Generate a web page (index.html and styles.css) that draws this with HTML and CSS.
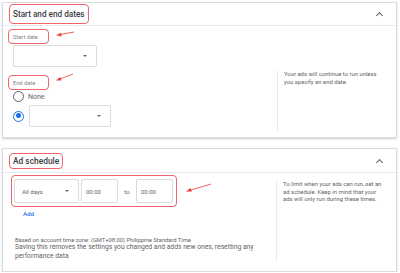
FILE: index.html
```
<!DOCTYPE html>
<html lang="en">
<head>
    <meta charset="UTF-8">
    <meta name="viewport" content="width=device-width, initial-scale=1.0">
    <title>Campaign settings</title>
    <link rel="stylesheet" href="styles.css">
</head>
<body>
    <div class="page">
        <!-- Start and end dates -->
        <div class="card">
            <div class="card-header">
                <span class="mark title-mark">Start and end dates</span>
                <span class="chevron"></span>
            </div>
            <div class="card-body">
                <div class="section">
                    <div class="section-main">
                        <div class="mark field-label">Start date</div>
                        <div class="select select-date"><span class="caret"></span></div>
                    </div>
                </div>
                <div class="section">
                    <div class="section-main">
                        <div class="mark field-label end-label">End date</div>
                        <div class="radio-row">
                            <span class="radio"></span>
                            <span class="radio-text">None</span>
                        </div>
                        <div class="radio-row">
                            <span class="radio checked"></span>
                            <div class="select select-date"><span class="caret"></span></div>
                        </div>
                    </div>
                    <div class="section-aside aside-dates">
                        Your ads will continue to run unless you specify an end date.
                    </div>
                </div>
            </div>
            <svg class="annot" width="396" height="137" viewBox="0 0 396 137">
                <line x1="71" y1="29" x2="57" y2="31.5" stroke="#ef3b3b" stroke-width="0.8"/>
                <polygon points="53,32.2 58,29.8 58.6,33.4" fill="#ef3b3b"/>
                <line x1="70" y1="71" x2="57" y2="76" stroke="#ef3b3b" stroke-width="0.8"/>
                <polygon points="53,77.5 57.2,74 58.4,77.4" fill="#ef3b3b"/>
            </svg>
        </div>

        <!-- Ad schedule -->
        <div class="card">
            <div class="card-header header-small">
                <span class="mark title-mark small">Ad schedule</span>
                <span class="chevron"></span>
            </div>
            <div class="card-body">
                <div class="section">
                    <div class="section-main">
                        <div class="mark schedule">
                            <div class="select select-days">All days<span class="caret"></span></div>
                            <div class="time">00:00</div>
                            <span class="to">to</span>
                            <div class="time">00:00</div>
                        </div>
                        <a class="add">Add</a>
                        <p class="zone">Based on account time zone: (GMT+08:00) Philippine Standard Time</p>
                        <p class="note">Saving this removes the settings you changed and adds new ones, resetting any performance data</p>
                    </div>
                    <div class="section-aside aside-schedule">
                        To limit when your ads can run, set an ad schedule. Keep in mind that your ads will only run during these times.
                    </div>
                </div>
            </div>
            <svg class="annot" width="396" height="121" viewBox="0 0 396 121">
                <line x1="208" y1="35" x2="188" y2="41" stroke="#ef3b3b" stroke-width="0.8"/>
                <polygon points="183,42.5 187.6,39 188.8,42.6" fill="#ef3b3b"/>
            </svg>
        </div>
    </div>
</body>
</html>
```

FILE: styles.css
```
* {
    margin: 0;
    padding: 0;
    box-sizing: border-box;
}

body {
    font-family: Roboto, 'Liberation Sans', sans-serif;
    background: #ffffff;
    color: #3c4043;
}

.page {
    display: flex;
    flex-direction: column;
    gap: 10px;
    padding: 2px 3px 0 2px;
}

.card {
    position: relative;
    background: #ffffff;
    border: 1px solid #dadce0;
    box-shadow: 0 1px 2px rgba(60, 64, 67, 0.25);
}

.card-header {
    height: 23px;
    display: flex;
    align-items: center;
    justify-content: space-between;
    padding: 0 14px 0 6px;
    border-bottom: 1px solid #e8eaed;
}

.header-small {
    height: 24px;
}

.mark {
    border: 1.5px solid #f0646c;
    border-radius: 4px;
}

.title-mark {
    height: 20px;
    padding: 0 3px 0 3px;
    display: flex;
    align-items: center;
    font-size: 8.2px;
    font-weight: 500;
    color: #3c4043;
}

.title-mark.small {
    height: 16px;
    font-size: 8.4px;
}

.chevron {
    width: 5px;
    height: 5px;
    border-left: 1.3px solid #5f6368;
    border-top: 1.3px solid #5f6368;
    transform: rotate(45deg);
    margin-top: 3px;
}

.section {
    display: flex;
}

.section-main {
    width: 274px;
    padding-left: 5px;
}

.section-aside {
    flex: 1;
    border-left: 1px solid #e8eaed;
    padding: 1px 13px 0 6px;
    font-size: 5.9px;
    line-height: 7.5px;
    color: #5f6368;
}

.aside-dates {
    margin: 3px 0 6px 0;
}

.aside-schedule {
    margin: 7px 0 10px -1px;
}

.field-label {
    width: 41px;
    height: 15px;
    margin-top: 3px;
    padding-left: 4px;
    display: flex;
    align-items: center;
    font-size: 5.7px;
    color: #80868b;
}

.end-label {
    margin-top: 8px;
}

.select {
    position: relative;
    border: 1px solid #dadce0;
    border-radius: 2px;
    height: 22px;
}

.select-date {
    width: 84px;
    margin: 1px 0 0 5px;
}

.caret {
    position: absolute;
    right: 9px;
    top: 50%;
    margin-top: -1px;
    border-left: 2.5px solid transparent;
    border-right: 2.5px solid transparent;
    border-top: 2.5px solid #5f6368;
}

.radio-row {
    display: flex;
    align-items: center;
    gap: 4px;
    margin-top: 1px;
    padding-left: 5px;
}

.radio-row + .radio-row {
    margin-top: 3px;
    margin-bottom: 10px;
}

.radio-row .select-date {
    width: 82px;
    margin: 0;
}

.radio {
    width: 11px;
    height: 11px;
    border: 1.4px solid #5f6368;
    border-radius: 50%;
    position: relative;
}

.radio.checked {
    border-color: #1a73e8;
}

.radio.checked::after {
    content: '';
    position: absolute;
    left: 1.6px;
    top: 1.6px;
    width: 5px;
    height: 5px;
    border-radius: 50%;
    background: #1a73e8;
}

.radio-text {
    font-size: 7px;
    color: #5f6368;
}

.radio-row + .radio-row .radio {
    margin-right: 1px;
}

.schedule {
    width: 166px;
    height: 32px;
    margin: 2px 0 0 3px;
    padding: 2px;
    display: flex;
    align-items: center;
    gap: 2px;
}

.select-days {
    width: 65px;
    height: 24px;
    display: flex;
    align-items: center;
    padding-left: 7px;
    font-size: 6px;
    color: #5f6368;
}

.time {
    width: 37px;
    height: 24px;
    border: 1px solid #dadce0;
    border-radius: 2px;
    display: flex;
    align-items: center;
    padding-left: 4px;
    font-size: 6px;
    color: #5f6368;
}

.to {
    width: 14px;
    text-align: center;
    font-size: 6px;
    color: #5f6368;
}

.add {
    display: block;
    margin: 3px 0 0 15px;
    font-size: 6.2px;
    font-weight: 500;
    color: #1a73e8;
}

.zone {
    margin: 19px 0 0 7px;
    font-size: 5.8px;
    color: #5f6368;
}

.note {
    margin: 0 0 10px 7px;
    width: 256px;
    font-size: 6.75px;
    line-height: 9px;
    color: #5f6368;
}

.annot {
    position: absolute;
    left: 0;
    top: 0;
    pointer-events: none;
}
```
